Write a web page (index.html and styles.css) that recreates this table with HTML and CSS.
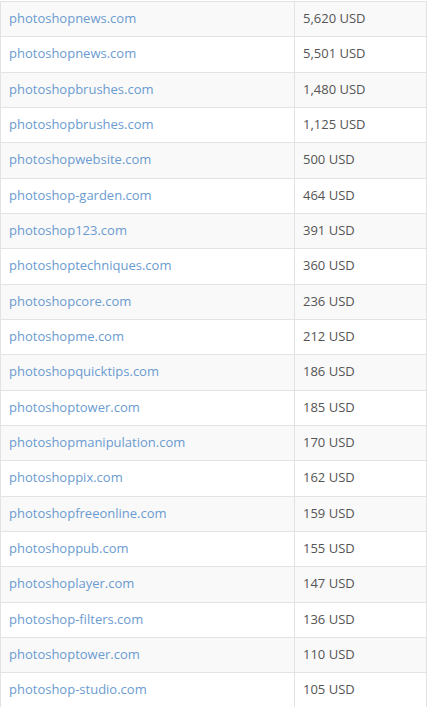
FILE: index.html
```html
<!DOCTYPE html>
<html>
<head>
<meta charset="utf-8">
<link rel="stylesheet" href="styles.css">
</head>
<body>
<table class="sales">
<tbody>
<tr><td class="domain"><a href="#">photoshopnews.com</a></td><td class="price">5,620 USD</td></tr>
<tr><td class="domain"><a href="#">photoshopnews.com</a></td><td class="price">5,501 USD</td></tr>
<tr><td class="domain"><a href="#">photoshopbrushes.com</a></td><td class="price">1,480 USD</td></tr>
<tr><td class="domain"><a href="#">photoshopbrushes.com</a></td><td class="price">1,125 USD</td></tr>
<tr><td class="domain"><a href="#">photoshopwebsite.com</a></td><td class="price">500 USD</td></tr>
<tr><td class="domain"><a href="#">photoshop-garden.com</a></td><td class="price">464 USD</td></tr>
<tr><td class="domain"><a href="#">photoshop123.com</a></td><td class="price">391 USD</td></tr>
<tr><td class="domain"><a href="#">photoshoptechniques.com</a></td><td class="price">360 USD</td></tr>
<tr><td class="domain"><a href="#">photoshopcore.com</a></td><td class="price">236 USD</td></tr>
<tr><td class="domain"><a href="#">photoshopme.com</a></td><td class="price">212 USD</td></tr>
<tr><td class="domain"><a href="#">photoshopquicktips.com</a></td><td class="price">186 USD</td></tr>
<tr><td class="domain"><a href="#">photoshoptower.com</a></td><td class="price">185 USD</td></tr>
<tr><td class="domain"><a href="#">photoshopmanipulation.com</a></td><td class="price">170 USD</td></tr>
<tr><td class="domain"><a href="#">photoshoppix.com</a></td><td class="price">162 USD</td></tr>
<tr><td class="domain"><a href="#">photoshopfreeonline.com</a></td><td class="price">159 USD</td></tr>
<tr><td class="domain"><a href="#">photoshoppub.com</a></td><td class="price">155 USD</td></tr>
<tr><td class="domain"><a href="#">photoshoplayer.com</a></td><td class="price">147 USD</td></tr>
<tr><td class="domain"><a href="#">photoshop-filters.com</a></td><td class="price">136 USD</td></tr>
<tr><td class="domain"><a href="#">photoshoptower.com</a></td><td class="price">110 USD</td></tr>
<tr><td class="domain"><a href="#">photoshop-studio.com</a></td><td class="price">105 USD</td></tr>
</tbody>
</table>
</body>
</html>
```
FILE: styles.css
```css
html, body {
  margin: 0;
  padding: 0;
  background: #fff;
}
body {
  padding-top: 1px;
  font-family: "Open Sans", "Liberation Sans", sans-serif;
  font-size: 13px;
  color: #555;
}
.sales {
  width: 427px;
  border-collapse: collapse;
  table-layout: fixed;
}
.sales tr:nth-child(odd) {
  background: #f9f9f9;
}
.sales td {
  border: 1px solid #e3e3e3;
  height: 35.33px;
  box-sizing: border-box;
  padding: 0 8px 2px 8px;
  vertical-align: middle;
  white-space: nowrap;
}
.sales td.domain {
  width: 294px;
}
.sales a {
  color: #6b9bd0;
  text-decoration: none;
}
```
